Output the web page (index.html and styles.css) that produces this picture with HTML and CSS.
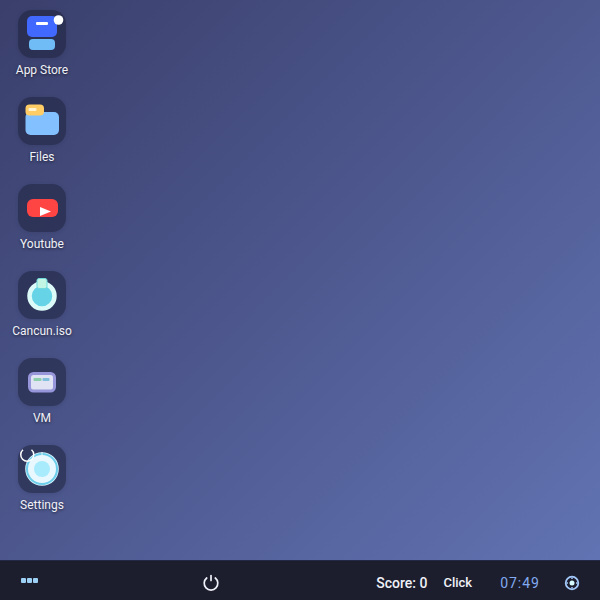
FILE: index.html
```html
<!DOCTYPE html>
<html lang="en">
<head>
    <meta charset="UTF-8">
    <meta name="viewport" content="width=device-width, initial-scale=1.0">
    <title>Desktop</title>
    <link rel="stylesheet" href="styles.css">
</head>
<body>
    <main class="desktop">
        <button class="desktop-icon" type="button">
            <svg class="icon" viewBox="0 0 48 48" aria-hidden="true">
                <rect x="9" y="6" width="30" height="21" rx="5" fill="#4169ff"/>
                <rect x="18" y="12" width="12" height="3" rx="1" fill="#fff"/>
                <rect x="11" y="29" width="26" height="11" rx="4" fill="#6fbcf6"/>
                <circle cx="40.5" cy="10" r="4.8" fill="#fff"/>
            </svg>
            <span class="label">App Store</span>
        </button>
        <button class="desktop-icon" type="button">
            <svg class="icon" viewBox="0 0 48 48" aria-hidden="true">
                <rect x="7.5" y="15" width="33.5" height="23" rx="5" fill="#82c0ff"/>
                <rect x="7.5" y="7.5" width="18.5" height="11" rx="4" fill="#ffcc66"/>
                <rect x="10.5" y="11" width="8" height="3" rx="1" fill="#fff3d0"/>
            </svg>
            <span class="label">Files</span>
        </button>
        <button class="desktop-icon" type="button">
            <svg class="icon" viewBox="0 0 48 48" aria-hidden="true">
                <rect x="9" y="15" width="31" height="18" rx="6" fill="#ff4444"/>
                <path d="M22 23 L33 27.5 L22 32 Z" fill="#fff"/>
            </svg>
            <span class="label">Youtube</span>
        </button>
        <button class="desktop-icon" type="button">
            <svg class="icon" viewBox="0 0 48 48" aria-hidden="true">
                <circle cx="24" cy="25" r="12.5" fill="#66d4e6" stroke="#dcfbf8" stroke-width="4.5"/>
                <rect x="19" y="7.5" width="10" height="10" rx="2" fill="#c2f5e3" stroke="#6fd9dc"/>
            </svg>
            <span class="label">Cancun.iso</span>
        </button>
        <button class="desktop-icon" type="button">
            <svg class="icon" viewBox="0 0 48 48" aria-hidden="true">
                <rect x="11.5" y="15.5" width="25" height="17.5" rx="4" fill="#dfe3f3" stroke="#9896da" stroke-width="3"/>
                <rect x="15.5" y="20" width="8" height="3" rx="1" fill="#8ccfac"/>
                <rect x="24.5" y="20" width="7" height="3" rx="1" fill="#82bfdc"/>
            </svg>
            <span class="label">VM</span>
        </button>
        <button class="desktop-icon" type="button">
            <svg class="icon" viewBox="0 0 48 48" aria-hidden="true">
                <circle cx="24" cy="24" r="16.8" fill="#d8f4ff"/>
                <circle cx="24" cy="24" r="16" fill="#6bcde9"/>
                <circle cx="24" cy="24" r="14" fill="#e9f8ff"/>
                <circle cx="24" cy="24" r="8" fill="#a8ebfc"/>
                <path d="M24 7 V11" stroke="#e6f8ff"/>
                <path d="M5 4.8 A6.5 6.5 0 1 0 13.5 4.8" fill="none" stroke="#fff" stroke-width="1.5"/>
            </svg>
            <span class="label">Settings</span>
        </button>
    </main>

    <footer class="taskbar">
        <button class="taskbar-btn menu-btn" type="button" aria-label="Menu">
            <svg width="18" height="18" viewBox="0 0 18 18" fill="#9cd0f5">
                <rect x="1" y="4" width="5" height="5" rx="1"/>
                <rect x="7" y="4" width="5" height="5" rx="1"/>
                <rect x="13" y="4" width="5" height="5" rx="1"/>
            </svg>
        </button>
        <button class="taskbar-btn power-btn" type="button" aria-label="Power">
            <svg width="18" height="18" viewBox="0 0 18 18" fill="none" stroke="#f0f1f8" stroke-width="1.7" stroke-linecap="round">
                <path d="M4.7 4 A6.8 6.8 0 1 0 13.3 4"/>
                <path d="M9 1.5 V6.5"/>
            </svg>
        </button>
        <div class="status">
            <span class="score">Score: 0</span>
            <button class="click-btn" type="button">Click</button>
            <time class="clock">07:49</time>
            <button class="taskbar-btn" type="button" aria-label="Quick settings">
                <svg width="18" height="18" viewBox="0 0 18 18" fill="none">
                    <circle cx="9" cy="9" r="6.3" stroke="#a3c8fa" stroke-width="1.8"/>
                    <path d="M9 3.5 V5 M9 13 V14.5 M3.5 9 H5 M13 9 H14.5" stroke="#a3c8fa" stroke-width="1.5"/>
                    <circle cx="9" cy="9" r="2.5" fill="#d5fbff"/>
                </svg>
            </button>
        </div>
    </footer>
</body>
</html>
```
FILE: styles.css
```css
* {
    box-sizing: border-box;
}

body {
    margin: 0;
    min-height: 100vh;
    display: flex;
    flex-direction: column;
    font-family: Roboto, sans-serif;
    color: #f0f1f8;
    background: linear-gradient(135deg, #3a3f6b 0%, #4e5990 50%, #6375b5 100%);
}

button {
    padding: 0;
    border: none;
    background: none;
    color: inherit;
    font-family: inherit;
    cursor: pointer;
}

.desktop {
    flex: 1;
    display: flex;
    flex-direction: column;
    align-items: flex-start;
    gap: 19px;
    padding: 10px 2px;
}

.desktop-icon {
    display: flex;
    flex-direction: column;
    align-items: center;
    gap: 4px;
    width: 80px;
}

.icon {
    width: 48px;
    height: 48px;
    border-radius: 14px;
    background: rgba(30, 34, 60, 0.55);
    box-shadow: 0 1px 4px rgba(20, 24, 50, 0.15);
}

.label {
    font-size: 12px;
    line-height: 16px;
    text-shadow: 0 1px 3px rgba(0, 0, 0, 0.6);
}

.taskbar {
    display: flex;
    align-items: center;
    height: 40px;
    padding: 4px 16px 0 20px;
    border-top: 1px solid #232944;
    background: #1c1e2d;
}

.taskbar-btn {
    display: flex;
    align-items: center;
    justify-content: center;
    width: 24px;
    height: 24px;
}

.menu-btn {
    justify-content: flex-start;
    width: 26px;
}

.power-btn {
    margin: 0 auto;
}

.status {
    display: flex;
    align-items: center;
    gap: 16px;
}

.score,
.click-btn {
    font-size: 14px;
    font-weight: 500;
    line-height: 20px;
}

.click-btn {
    font-size: 13px;
}

.clock {
    margin-left: 12px;
    margin-right: 4px;
    font-size: 14px;
    line-height: 20px;
    letter-spacing: 1px;
    color: #82aaf0;
}
```
